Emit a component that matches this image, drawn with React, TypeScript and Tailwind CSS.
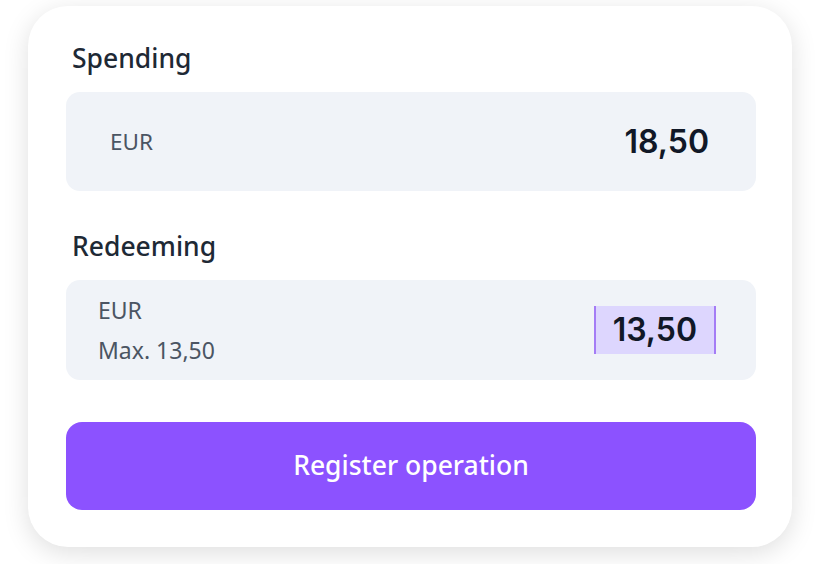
export default function App(): JSX.Element {
    return (
        <div className="w-[820px] h-[564px] bg-white pl-[28px] pt-[6px]">
            <div className="w-[764px] rounded-[40px] bg-white shadow-[0_6px_26px_rgba(0,0,0,0.13)] pl-[38px] pr-[36px] pt-[35px] pb-[37px]">
                {/* Spending */}
                <h2 className="font-['Noto_Sans',sans-serif] font-medium text-[26.5px] leading-[34px] text-[#1e2935] pl-[6px]">
                    Spending
                </h2>
                <div className="mt-[17px] h-[99px] rounded-[14px] bg-[#f0f3f8] flex items-center justify-between pl-[44px] pr-[47px]">
                    <span className="font-['Noto_Sans',sans-serif] text-[22.5px] text-[#4b5563]">EUR</span>
                    <span className="font-['Inter',sans-serif] font-semibold text-[32px] text-[#111827]">18,50</span>
                </div>

                {/* Redeeming */}
                <h2 className="mt-[38px] font-['Noto_Sans',sans-serif] font-medium text-[26.5px] leading-[34px] text-[#1e2935] pl-[6px]">
                    Redeeming
                </h2>
                <div className="mt-[17px] h-[100px] rounded-[14px] bg-[#f0f3f8] flex items-center justify-between pl-[32px] pr-[40px]">
                    <div className="flex flex-col font-['Noto_Sans',sans-serif] text-[23px] leading-[40px] text-[#4b5563]">
                        <span>EUR</span>
                        <span>Max. 13,50</span>
                    </div>
                    <div className="h-[48px] flex items-center bg-[#ddd6fe] border-x-2 border-[#a47cf5] px-[17px]">
                        <span className="font-['Inter',sans-serif] font-semibold text-[32px] text-[#111827]">13,50</span>
                    </div>
                </div>

                <button className="mt-[42px] w-full h-[88px] rounded-[16px] bg-[#8c52ff] text-white font-['Noto_Sans',sans-serif] font-medium text-[26.5px]">
                    Register operation
                </button>
            </div>
        </div>
    );
}
